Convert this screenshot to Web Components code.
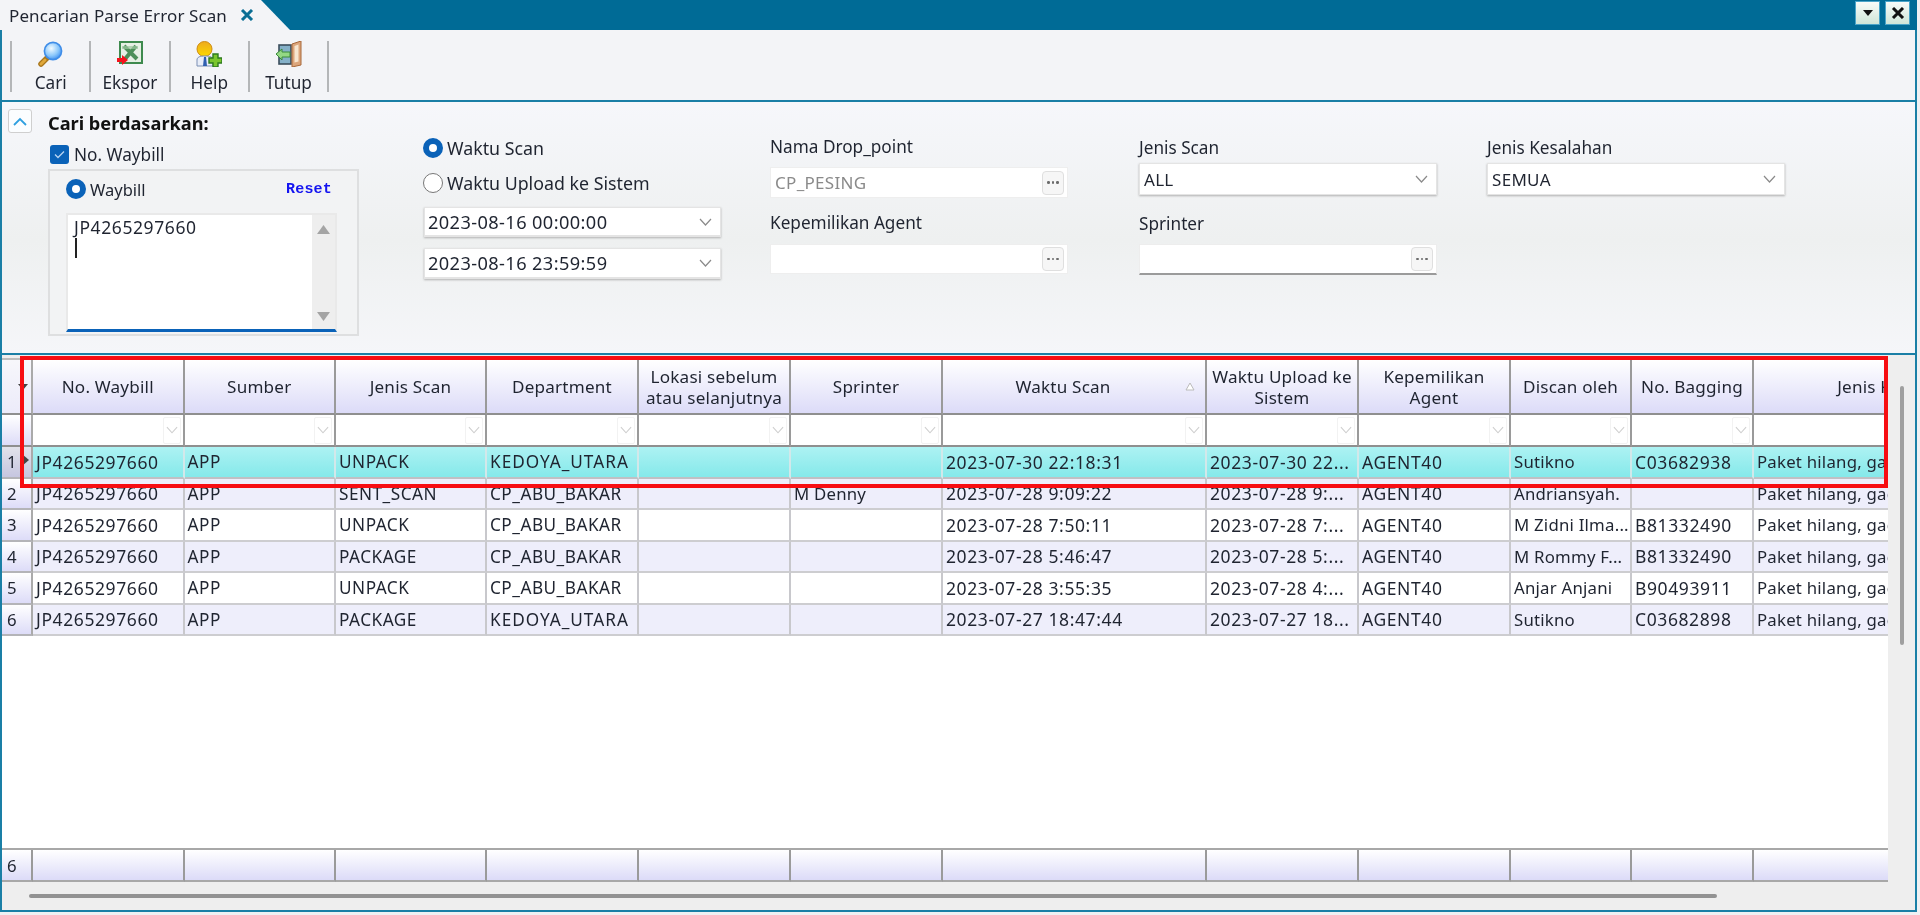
<!DOCTYPE html>
<html lang="id">
<head>
<meta charset="utf-8">
<title>Pencarian Parse Error Scan</title>
<style>
html,body{margin:0;padding:0;background:#eff1f3;overflow:hidden}
body{font:17px "Noto Sans","Liberation Sans",sans-serif;color:#1f2430}
</style>
</head>
<body>
<app-window>
  <win-tabs title-text="Pencarian Parse Error Scan"></win-tabs>
  <win-toolbar>
    <tool-button label="Cari"><svg viewBox="0 0 26 26" width="26" height="26"><defs><radialGradient id="g1" cx=".4" cy=".35" r=".7"><stop offset="0" stop-color="#f2fbff"/><stop offset=".6" stop-color="#8cc8fb"/><stop offset="1" stop-color="#3c8df0"/></radialGradient></defs><path d="M3 23l7-7" stroke="#a8761c" stroke-width="5.5" stroke-linecap="round"/><path d="M3 23l4-4" stroke="#e0a83a" stroke-width="3" stroke-linecap="round"/><circle cx="15" cy="10" r="8.6" fill="url(#g1)" stroke="#3f8de8" stroke-width="1.6"/></svg></tool-button>
    <tool-button label="Ekspor"><svg viewBox="0 0 26 26" width="26" height="26"><rect x="3" y="1" width="22" height="21" fill="#e6f0e4" stroke="#3e8a4e" stroke-width="2"/><path d="M7 5l13 13M19 5L8 18" stroke="#4c9058" stroke-width="4"/><path d="M5 5h16v3H5z" fill="#9cc6a0" opacity=".7"/><path d="M0 17h5v-3l6 5-6 5v-3H0z" fill="#f5121c"/></svg></tool-button>
    <tool-button label="Help"><svg viewBox="0 0 26 26" width="26" height="26"><defs><linearGradient id="g2" x1="0" y1="0" x2="0" y2="1"><stop offset="0" stop-color="#eeaa1e"/><stop offset="1" stop-color="#fbd900"/></linearGradient></defs><ellipse cx="8.500" cy="8" rx="7.500" ry="7.500" fill="url(#g2)" stroke="#cf8c12" stroke-width="1"/><path d="M1 25v-6c0-3 3-4 8-4s8 1 8 4v6z" fill="#e8edf8" stroke="#7a8fb4"/><path d="M8 16h2l1 9H7z" fill="#2f5fb0"/><path d="M17 13h5v4h4v5h-4v4h-5v-4h-4v-5h4z" fill="#7bc62d" stroke="#2d7a1e" stroke-width="1.4"/></svg></tool-button>
    <tool-button label="Tutup"><svg viewBox="0 0 26 26" width="26" height="26"><rect x="3" y="4" width="12" height="19" fill="#84b0c8" stroke="#3b4e5c" stroke-width="1.6"/><path d="M16 3l9-3v24l-9 2z" fill="#dca67c" stroke="#a8683a"/><path d="M18.500 5l4-1.500v17l-4 1z" fill="#f7e6d0"/><path d="M0 13l6-5v3h8v5H6v3z" fill="#94d884" stroke="#3a8a3a"/></svg></tool-button>
  </win-toolbar>
  <search-panel></search-panel>
  <data-grid></data-grid>
  <mark-box></mark-box>
</app-window>

<script>
const FONT='"Noto Sans","Liberation Sans",sans-serif';
function shadow(el,html){el.attachShadow({mode:'open'}).innerHTML=html;return el.shadowRoot;}
const chevron=(c='#8a8a8a',w=13)=>`<svg width="${w}" height="8" viewBox="0 0 13 8"><path d="M1 1l5.500 6L12 1" fill="none" stroke="${c}" stroke-width="1.2"/></svg>`;

customElements.define('app-window',class extends HTMLElement{constructor(){super();shadow(this,`<style>
:host{display:flex;flex-direction:column;position:relative;box-sizing:border-box;width:1917px;height:912px;border:solid #1a7fa6;border-width:0 2px 2px 2px;background:#f3f4f7;filter:blur(.35px);font:17px ${FONT};color:#1f2430}
</style><slot></slot>`);}});

customElements.define('win-tabs',class extends HTMLElement{constructor(){super();shadow(this,`<style>
:host{display:flex;flex:none;height:30px;margin:0 -2px;background:#006b96;align-items:flex-start;justify-content:space-between}
.tab{width:290px;height:30px;box-sizing:border-box;padding-left:9px;display:flex;align-items:center;gap:13px;background:#f3f4f7;clip-path:polygon(0 0,261px 0,290px 30px,0 30px);font-size:17px;white-space:nowrap;letter-spacing:.1px}
.wb{display:flex;gap:5px;padding:1px 7px 0 0}
.btn{width:25px;height:24px;box-sizing:border-box;border:1px solid #4aa4c8;background:linear-gradient(#f8fbf8,#cfe6d8);display:flex;align-items:center;justify-content:center}
</style><div class="tab"><span id="t"></span><svg width="14" height="12" viewBox="0 0 14 12"><path d="M2 1l10 10M12 1L2 11" stroke="#0a6e94" stroke-width="3"/></svg></div>
<div class="wb"><div class="btn"><svg width="12" height="7" viewBox="0 0 12 7"><path d="M1 0h10L6 6z" fill="#111"/></svg></div><div class="btn"><svg width="14" height="12" viewBox="0 0 14 12"><path d="M2 1l10 10M12 1L2 11" stroke="#111" stroke-width="3"/></svg></div></div>`);}
connectedCallback(){this.shadowRoot.getElementById('t').textContent=this.getAttribute('title-text');}});

customElements.define('win-toolbar',class extends HTMLElement{constructor(){super();shadow(this,`<style>
:host{display:flex;flex:none;box-sizing:border-box;height:72px;padding:11px 0 0 8px;background:#f3f4f7;border-bottom:2px solid #1a7fa6;align-items:flex-start}
.end{width:2px;height:51px;background:#b4b6b8}
</style><slot></slot><div class="end"></div>`);}});

customElements.define('tool-button',class extends HTMLElement{constructor(){super();shadow(this,`<style>
:host{display:flex;flex-direction:column;align-items:center;box-sizing:border-box;width:79.300px;height:51px;border-left:2px solid #b4b6b8;font-size:17.200px;line-height:22px}
.ic{height:28px;display:flex;align-items:flex-start;justify-content:center}
.lb{margin-top:5px;white-space:nowrap}
::slotted(svg){display:block}
</style><div class="ic"><slot></slot></div><div class="lb" id="l"></div>`);}
connectedCallback(){this.shadowRoot.getElementById('l').textContent=this.getAttribute('label');}});

customElements.define('opt-radio',class extends HTMLElement{constructor(){super();shadow(this,`<style>
:host{display:flex;align-items:center;gap:4px;height:20px;white-space:nowrap;font-size:16.500px}
.r{box-sizing:border-box;width:20px;height:20px;border-radius:50%;flex:none}
:host([checked]) .r{background:#fff;border:6px solid #0a62b8}
:host(:not([checked])) .r{background:#fff;border:1.500px solid #777}
</style><div class="r"></div><slot></slot>`);}});

customElements.define('form-control',class extends HTMLElement{constructor(){super();shadow(this,`<style>
:host{display:flex;align-items:center;box-sizing:border-box;width:298px;height:var(--h,31px);background:#fff;padding:0 3px 0 4px;font-size:17px;letter-spacing:.3px;white-space:nowrap;border:1px solid #eeeeee}
:host([line]){border-color:#ededed;border-bottom:2px solid #9b9b9b}
:host([select]){box-shadow:0 1px 2px #b0b0b0;border-color:#e4e4e4}
:host([date]){font-size:18.200px;letter-spacing:.4px;margin-left:1px;width:297px;padding-left:3px}
.v{flex:1;overflow:hidden}
:host([muted]) .v{color:#8a8a8a}
.more{box-sizing:border-box;width:22px;height:24px;border:1px solid #dfdfdf;border-radius:4px;background:#f6f6f6;display:flex;align-items:center;justify-content:center;gap:2px}
.more i{display:block;width:2.500px;height:2.500px;background:#6c6c6c;border-radius:50%}
.ch{width:24px;display:flex;justify-content:center}
</style><div class="v"><slot></slot></div><div id="a"></div>`);}
connectedCallback(){const a=this.shadowRoot.getElementById('a');
a.innerHTML=this.hasAttribute('select')?`<div class="ch">${chevron()}</div>`:`<div class="more"><i></i><i></i><i></i></div>`;}});

customElements.define('search-panel',class extends HTMLElement{constructor(){super();shadow(this,`<style>
:host{display:flex;flex:none;box-sizing:border-box;height:253px;border-bottom:2px solid #1a7fa6;background:linear-gradient(#f6f7fb,#eef0f0 55%,#f5f6f9);font-size:17.200px}
.tog{box-sizing:border-box;width:24px;height:24px;margin:7px 0 0 6px;border:1.500px solid #cfcfcf;border-radius:3px;background:#fbfdff;display:flex;align-items:center;justify-content:center}
.left{width:311px;margin-left:16px}
.ttl{font-weight:700;font-size:18.200px;height:22px;line-height:22px;margin-top:10px;color:#111;white-space:nowrap}
.ck{display:flex;align-items:center;gap:5px;height:20px;margin-top:10px;margin-left:2px}
.cb{box-sizing:border-box;width:19px;height:19px;background:#0a62b8;border-radius:3px;display:flex;align-items:center;justify-content:center}
.box{box-sizing:border-box;height:167px;margin-top:5px;border:2px solid #dedfe0;padding:8px 0 0 16px;background:#f2f3f4}
.rrow{display:flex;justify-content:space-between;padding-right:25px}
.reset{font:700 15px/22px "Liberation Mono",monospace;color:#1414f0;letter-spacing:.2px}
.ta{box-sizing:border-box;display:flex;width:271px;height:119px;margin-top:12px;background:#fff;border:solid #e9e9e9;border-width:2px 2px 0;border-bottom:3px solid #0a62b8}
.tx{flex:1;padding:1px 0 0 6px;line-height:22px;font-size:17.500px;letter-spacing:.6px}
.caret{width:1.500px;height:20px;background:#222;margin-left:1px}
.sb{width:23px;background:#eeeeee;display:flex;flex-direction:column;justify-content:space-between;align-items:center;padding:10px 0 8px}
.c2{width:298px;margin-left:64px;padding-top:36px;box-sizing:border-box}
.c2 opt-radio{font-size:17.800px}
.c2 opt-radio+opt-radio{margin-top:15px}
.c3{width:298px;margin-left:49px}
.c4{width:298px;margin-left:71px}
.c5{width:298px;margin-left:50px}
.lb{height:20px;line-height:20px;white-space:nowrap}
.c3 .lb:first-child{margin-top:35px}
.c4 .lb:first-child,.c5 .lb:first-child{margin-top:36px}
.c3 form-control{margin-top:10px}
.c3 .lb.n{margin-top:15px}
.c3 form-control.n{margin-top:11px;--h:30px}
.c4 form-control.s,.c5 form-control.s{margin-top:5px;--h:32px}
.c4 .lb.n{margin-top:19px}
.c4 form-control.n{margin-top:10px}
</style>
<div class="tog"><svg width="14" height="9" viewBox="0 0 14 9"><path d="M1 8l6-6 6 6" fill="none" stroke="#2f9fe0" stroke-width="1.800"/></svg></div>
<div class="left">
  <div class="ttl">Cari berdasarkan:</div>
  <div class="ck"><div class="cb"><svg width="11" height="9" viewBox="0 0 11 9"><path d="M1 4.500l3 3 6-6" fill="none" stroke="#b8d4f2" stroke-width="1.300"/></svg></div><span>No. Waybill</span></div>
  <div class="box">
    <div class="rrow"><opt-radio checked>Waybill</opt-radio><span class="reset">Reset</span></div>
    <div class="ta"><div class="tx">JP4265297660<div class="caret"></div></div>
      <div class="sb"><svg width="13" height="9" viewBox="0 0 13 9"><path d="M6.500 0L13 9H0z" fill="#a4a4a4"/></svg><svg width="13" height="9" viewBox="0 0 13 9"><path d="M0 0h13L6.500 9z" fill="#a4a4a4"/></svg></div></div>
  </div>
</div>
<div class="c2">
  <opt-radio checked>Waktu Scan</opt-radio>
  <opt-radio>Waktu Upload ke Sistem</opt-radio>
  <form-control date select line style="margin-top:14px;--h:30px">2023-08-16 00:00:00</form-control>
  <form-control date select line style="margin-top:11px;--h:31px">2023-08-16 23:59:59</form-control>
</div>
<div class="c3">
  <div class="lb">Nama Drop_point</div>
  <form-control muted>CP_PESING</form-control>
  <div class="lb n">Kepemilikan Agent</div>
  <form-control class="n"></form-control>
</div>
<div class="c4">
  <div class="lb">Jenis Scan</div>
  <form-control class="s" select>ALL</form-control>
  <div class="lb n">Sprinter</div>
  <form-control class="n" line></form-control>
</div>
<div class="c5">
  <div class="lb">Jenis Kesalahan</div>
  <form-control class="s" select>SEMUA</form-control>
</div>`);}});

const COLS='31px 151.500px 151.500px 151px 152px 152px 152px 264px 152px 152px 121px 122px 296px';
const HEAD=['No. Waybill','Sumber','Jenis Scan','Department','Lokasi sebelum<br>atau selanjutnya','Sprinter','Waktu Scan','Waktu Upload ke<br>Sistem','Kepemilikan<br>Agent','Discan oleh','No. Bagging','Jenis Kesalahan'];
const J='JP4265297660',P='Paket hilang, gagal';
const ROWS=[
[J,'APP','UNPACK','KEDOYA_UTARA','','','2023-07-30 22:18:31','2023-07-30 22...','AGENT40','Sutikno','C03682938',P],
[J,'APP','SENT_SCAN','CP_ABU_BAKAR','','M Denny','2023-07-28 9:09:22','2023-07-28 9:...','AGENT40','Andriansyah.','',P],
[J,'APP','UNPACK','CP_ABU_BAKAR','','','2023-07-28 7:50:11','2023-07-28 7:...','AGENT40','M Zidni Ilma...','B81332490',P],
[J,'APP','PACKAGE','CP_ABU_BAKAR','','','2023-07-28 5:46:47','2023-07-28 5:...','AGENT40','M Rommy F...','B81332490',P],
[J,'APP','UNPACK','CP_ABU_BAKAR','','','2023-07-28 3:55:35','2023-07-28 4:...','AGENT40','Anjar Anjani','B90493911',P],
[J,'APP','PACKAGE','KEDOYA_UTARA','','','2023-07-27 18:47:44','2023-07-27 18...','AGENT40','Sutikno','C03682898',P]];
const cls=t=>/\d/.test(t)?'k':/^[A-Z_]+$/.test(t)?(t.startsWith('KEDOYA')?'u w':'u'):'';

customElements.define('data-grid',class extends HTMLElement{constructor(){super();
const hd=HEAD.map((h,i)=>`<div class="c${i==6?' sorted':''}">${h}${i==6?'<svg class="sort" width="10" height="9" viewBox="0 0 10 9"><path d="M5 1L1 8h8z" fill="#fff" stroke="#bbb"/></svg>':''}</div>`).join('');
const flt=HEAD.map((h,i)=>`<div class="c">${i<11?`<span class="fb">${chevron('#cfcfcf',12)}</span>`:''}</div>`).join('');
const rows=ROWS.map((r,i)=>`<div class="row d ${i==0?'sel':i%2?'alt':''}"><div class="n">${i+1}${i==0?'<svg class="cur" width="7" height="12" viewBox="0 0 7 12"><path d="M0 0l7 6-7 6z" fill="#444"/></svg>':''}</div>${r.map(t=>`<div class="c ${cls(t)}">${t}</div>`).join('')}</div>`).join('');
const foot=HEAD.map(()=>`<div class="c"></div>`).join('');
shadow(this,`<style>
:host{display:flex;flex-direction:column;flex:1;min-height:0;padding-top:3px;background:#eeeeee;font-size:16.800px;letter-spacing:.22px}
.body{display:flex;flex:1;min-height:0}
.table{flex:none;width:1886px;overflow:hidden;background:#fff;display:flex;flex-direction:column}
.row{display:grid;grid-template-columns:${COLS};width:max-content;flex:none}
.c,.n{box-sizing:border-box;overflow:hidden;white-space:nowrap;display:flex;align-items:center;position:relative}
.c{padding-left:3px;border-right:2px solid #c8c8cc;border-bottom:2px solid #cdcdd0}
.c.k{font-size:17.500px;letter-spacing:.6px}
.c.u{font-size:17.200px;letter-spacing:.5px}
.c.u.w{letter-spacing:1px}
.n{padding-left:5px;border-right:2px solid #aaa;border-bottom:2px solid #b4b4b8;background:linear-gradient(#fff,#dddcf8)}
.hdr{height:57px}
.hdr .c{justify-content:center;text-align:center;line-height:21px;padding:0 2px;font-size:17.100px;letter-spacing:.2px;background:linear-gradient(#fff,#dcdbf8);border-right-color:#9a9a9a;border-bottom-color:#8f8f8f;border-top:2px solid #bdbdbd}
.hdr .c.sorted{padding-right:24px}
.hdr .n{border-top:2px solid #bdbdbd;border-bottom-color:#8f8f8f;background:linear-gradient(#f7f7fb,#ecebfa);justify-content:flex-end}
.sort{position:absolute;right:10px;top:22px}
.tri{margin:0 3px 0 0}
.flt{height:32px}
.flt .c{background:#fff;border-right-color:#9a9a9a;border-bottom-color:#8f8f8f;justify-content:flex-end;padding:0 2px 0 0}
.flt .n{border-bottom-color:#8f8f8f}
.fb{box-sizing:border-box;width:18px;height:27px;border:1px solid #f2f2f2;border-radius:2px;display:flex;align-items:center;justify-content:center}
.d{grid-auto-rows:31.500px}
.alt .c{background:#eeeefb}
.sel .c{background:linear-gradient(#adf2f3,#85e9ea);border-right-color:#d2e8ea;border-bottom-color:#c0c0c4}
.sel .n{background:linear-gradient(#e2e2ea,#c6c6e0)}
.cur{position:absolute;left:20px;top:7px}
.spacer{flex:1}
.ft{height:32px;border-top:2px solid #a8a8a8}
.ft .c,.ft .n{background:linear-gradient(#fff,#dcdbf8);border-right-color:#9a9a9a;border-bottom-color:#a8a8a8}
.vbar{flex:1;display:flex;justify-content:center;padding:28px 0 0 0}
.vbar div{width:4px;height:259px;background:#9f9f9f;border-radius:2px}
.hbar{flex:none;height:28px;display:flex;align-items:center;padding-left:27px}
.hbar div{width:1688px;height:4px;background:#929292;border-radius:2px}
</style>
<div class="body"><div class="table">
<div class="row hdr"><div class="n"><svg class="tri" width="10" height="6" viewBox="0 0 10 6"><path d="M0 0h10L5 6z" fill="#444"/></svg></div>${hd}</div>
<div class="row flt"><div class="n"></div>${flt}</div>
${rows}
<div class="spacer"></div>
<div class="row ft"><div class="n">6</div>${foot}</div>
</div><div class="vbar"><div></div></div></div>
<div class="hbar"><div></div></div>`);}});

customElements.define('mark-box',class extends HTMLElement{constructor(){super();shadow(this,`<style>
:host{position:absolute;left:18px;top:356px;width:1868px;height:132px;box-sizing:border-box;border:4px solid #f70d12;pointer-events:none}
</style>`);}});
</script>
</body>
</html>
